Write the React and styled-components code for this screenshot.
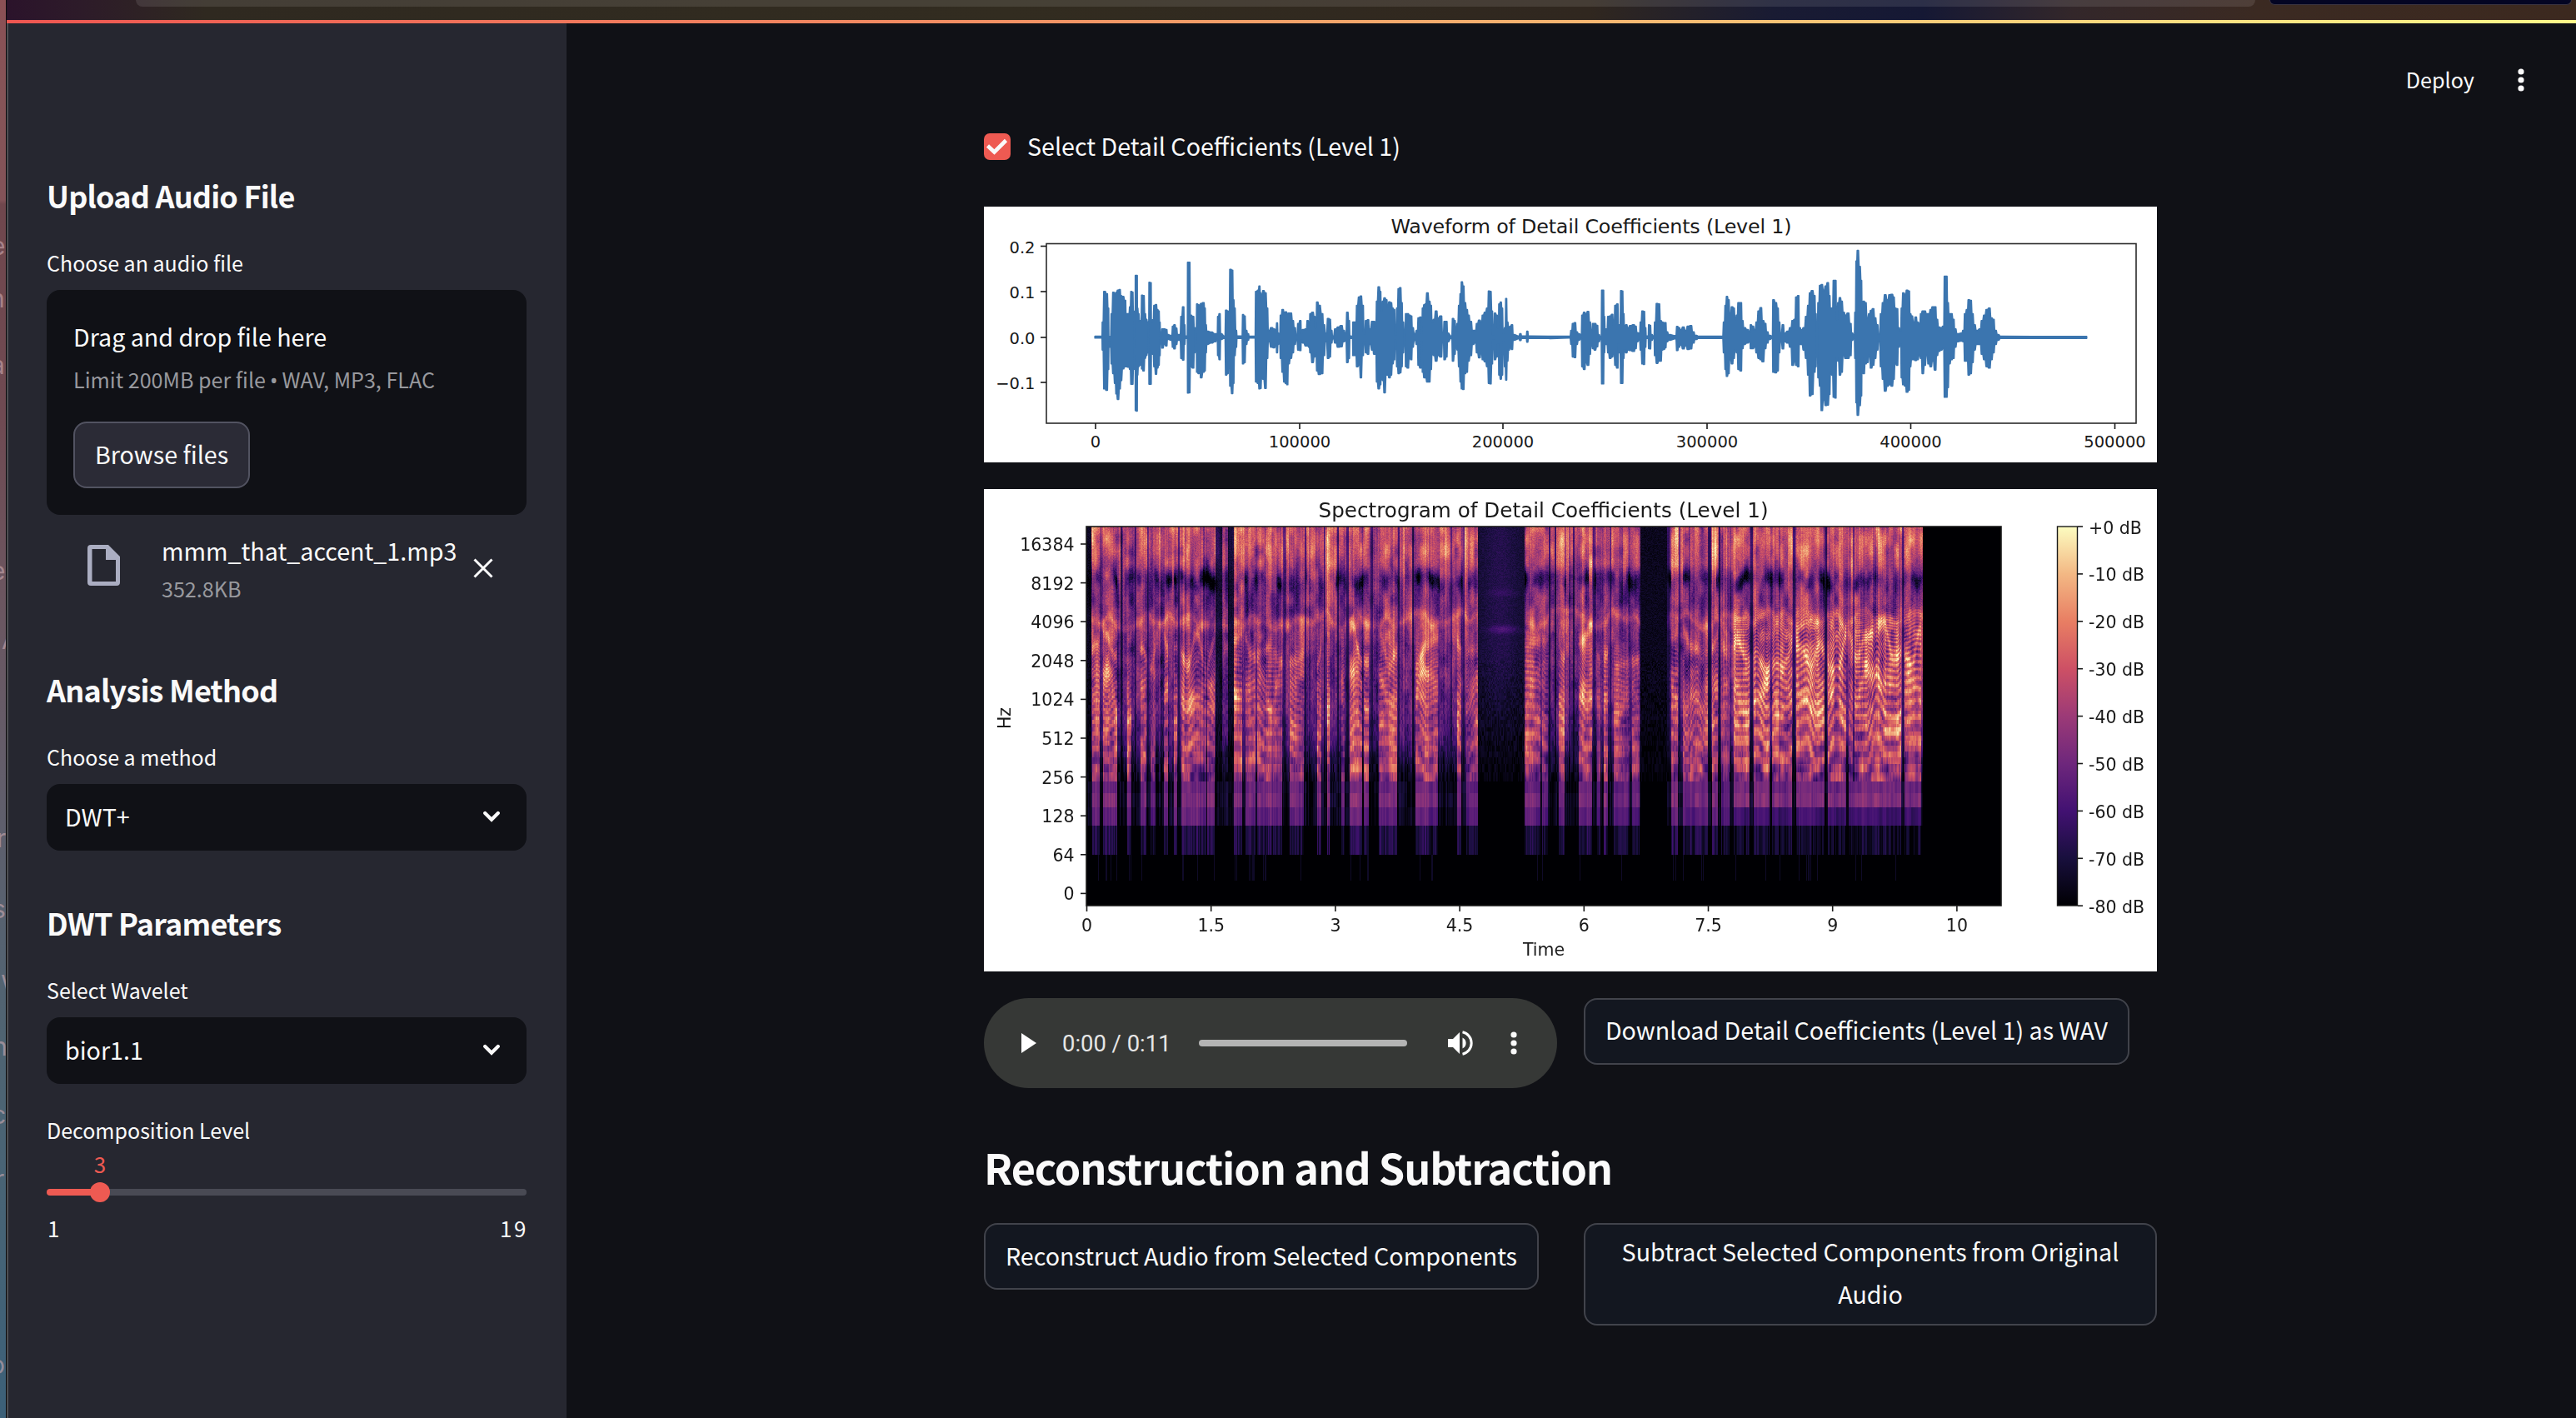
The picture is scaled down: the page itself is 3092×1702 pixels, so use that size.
import React, { useLayoutEffect, useRef } from "react";
import styled, { createGlobalStyle } from "styled-components";

const GlobalStyle = createGlobalStyle`
  * { box-sizing: border-box; }
  html, body { margin: 0; padding: 0; background: #101116; }
  body {
    font-family: "Noto Sans CJK SC", "Noto Sans", sans-serif;
    color: #fafafa;
    overflow: hidden;
  }
`;

/* ---------- window frame ---------- */

const Desktop = styled.div`
  display: flex;
  width: 3092px;
  height: 1702px;
  overflow: hidden;
`;

const Behind = styled.div`
  width: 7px;
  flex: none;
  overflow: hidden;
  padding-top: 277px;
  background: linear-gradient(#8b5055 0, #855457 120px, #835358 240px, #70474d 245px, #6f4a52 500px, #6b5660 720px, #635d6a 920px, #566270 1120px, #4f6472 1250px, #456376 1500px, #3c6078 1702px);
`;

const BehindLine = styled.div`
  height: ${(p) => p.$h}px;
  margin-left: ${(p) => p.$x}px;
  font: 30px/36px "Inter", sans-serif;
  color: rgba(205, 170, 178, 0.6);
  white-space: nowrap;
`;

const Frame = styled.div`
  flex: 1;
  min-width: 0;
  display: flex;
  flex-direction: column;
  border-left: 1px solid #0b0b0d;
`;

const BrowserStrip = styled.div`
  height: 24px;
  flex: none;
  display: flex;
  justify-content: flex-start;
  padding-left: 155px;
  background: linear-gradient(90deg, #2b132b 0, #2d1b29 90px, #2f2920 240px, #322c20 1200px, #30271f 1900px, #191b33 2120px, #151834 2300px, #33272a 2480px, #3b2a22 2700px, #3c291f 100%);
`;

const AddressBar = styled.div`
  width: 2544px;
  height: 8px;
  border-radius: 0 0 10px 10px;
  background: rgba(255, 255, 255, 0.1);
`;

const Extension = styled.div`
  width: 363px;
  height: 6px;
  margin-left: 17px;
  border-radius: 0 0 8px 8px;
  border: 1px solid #3a3440;
  border-top: 0;
  background: #040523;
`;

const Decoration = styled.div`
  height: 4px;
  flex: none;
  background: linear-gradient(90deg, #ee5651, #f3a269 50%, #fff98a);
`;

const Page = styled.div`
  flex: 1;
  min-height: 0;
  display: flex;
`;

/* ---------- sidebar ---------- */

const Sidebar = styled.aside`
  width: 672px;
  flex: none;
  border-left: 2px solid #4d4e52;
  background: #262730;
  padding: 182px 48px 0 46px;
`;

const SideHeading = styled.h2`
  margin: ${(p) => p.$mt || 0}px 0 0;
  font-size: 36px;
  line-height: 48px;
  font-weight: 600;
  letter-spacing: -0.8px;
  white-space: nowrap;
`;

const Label = styled.div`
  margin: ${(p) => p.$mt}px 0 13px;
  font-size: 25px;
  line-height: 40px;
  white-space: nowrap;
`;

const Dropzone = styled.div`
  height: 270px;
  padding: 31px 32px 32px;
  border-radius: 16px;
  background: #101116;
  display: flex;
  flex-direction: column;
  align-items: flex-start;
`;

const BodyText = styled.div`
  font-size: 28.65px;
  line-height: 50px;
  white-space: nowrap;
`;

const Muted = styled.div`
  font-size: 25.1px;
  line-height: 40px;
  color: #98999e;
  white-space: nowrap;
  margin-top: ${(p) => p.$mt || 0}px;
`;

const Bullet = styled.span`
  font-family: "Noto Sans", sans-serif;
  font-size: 25px;
  line-height: 1;
  margin: 0 -0.5px;
`;

const Button = styled.button`
  font: inherit;
  color: inherit;
  font-size: 28.65px;
  line-height: 51px;
  text-align: center;
  min-height: 80px;
  margin: 0;
  padding: ${(p) => p.$pad || "10px 20px 14px"};
  width: ${(p) => (p.$w ? p.$w + "px" : "auto")};
  border: 2px solid #41434b;
  border-radius: 16px;
  background: #131720;
  white-space: ${(p) => (p.$wrap ? "normal" : "nowrap")};
`;

const BrowseButton = styled(Button)`
  margin-top: 31px;
  background: #2b2b36;
  border-color: #525361;
`;

const FileRow = styled.div`
  display: flex;
  align-items: flex-start;
  padding: 18px 40px 0 49px;
  height: 109px;
`;

const FileIcon = styled.svg`
  width: 39px;
  height: 49px;
  margin: 18px 50px 0 0;
  flex: none;
`;

const FileInfo = styled.div`
  flex: 1;
  min-width: 0;
`;

const CloseIcon = styled.svg`
  width: 24px;
  height: 24px;
  flex: none;
  margin-top: 34px;
`;

const SelectBox = styled.div`
  height: 80px;
  padding: 0 32px 0 22px;
  border-radius: 16px;
  background: #101116;
  display: flex;
  align-items: center;
  justify-content: space-between;
  font-size: 28.65px;
  line-height: 76px;
  padding-bottom: 2px;
`;

const Chevron = styled.svg`
  width: 20px;
  height: 14px;
`;

const SliderValue = styled.div`
  margin-top: -7px;
  width: 128px;
  text-align: center;
  font-size: 26px;
  line-height: 30px;
  color: #ee5a52;
`;

const Track = styled.div`
  height: 8px;
  margin-top: 15px;
  border-radius: 4px;
  background: linear-gradient(90deg, #ee5a52 64px, #494a54 64px);
  display: flex;
  align-items: center;
`;

const Thumb = styled.div`
  width: 24px;
  height: 24px;
  flex: none;
  margin-left: 52px;
  border-radius: 50%;
  background: #ee5a52;
`;

const Range = styled.div`
  display: flex;
  justify-content: space-between;
  margin: 19px -2px 0 1px;
  font-size: 26px;
  line-height: 40px;
  letter-spacing: 2.6px;
`;

/* ---------- main area ---------- */

const Main = styled.main`
  flex: 1;
  min-width: 0;
`;

const Toolbar = styled.div`
  height: 122px;
  display: flex;
  justify-content: flex-end;
  align-items: flex-start;
  padding: 47px 56px 0 0;
  font-size: 25.2px;
  line-height: 40px;
`;

const KebabIcon = styled.svg`
  width: 8px;
  height: 28px;
  margin: 7px 6px 0 52px;
`;

const Content = styled.div`
  width: 1408px;
  margin-left: 501px;
  display: flex;
  flex-direction: column;
`;

const CheckRow = styled.div`
  display: flex;
  align-items: center;
  height: 52px;
  margin-bottom: 46px;
`;

const Checkbox = styled.svg`
  width: 32px;
  height: 32px;
  margin-right: 20px;
`;

const CheckLabel = styled.span`
  font-size: 28.65px;
  line-height: 48px;
  margin-top: -2px;
  white-space: nowrap;
`;

const Chart = styled.div`
  height: ${(p) => p.$h}px;
  margin-bottom: 32px;
  background: #fff;
  display: grid;
  & > * { grid-area: 1 / 1; }
`;

const Plot = styled.svg`
  width: 1408px;
  height: 100%;
  display: block;
  & text {
    font-family: "DejaVu Sans", sans-serif;
    fill: #1a1a1a;
  }
`;

const SpectrogramCanvas = styled.canvas`
  width: 1098px;
  height: 455px;
  margin: 45px 0 0 123px;
`;

const Row = styled.div`
  display: flex;
  align-items: flex-start;
`;

const Cell = styled.div`
  width: ${(p) => p.$w}px;
  flex: none;
`;

const Player = styled.div`
  width: 688px;
  height: 108px;
  border-radius: 54px;
  background: #363836;
  display: flex;
  align-items: center;
  padding-left: 44px;
`;

const PlayIcon = styled.svg`
  width: 20px;
  height: 24px;
  margin-right: 30px;
`;

const Time = styled.div`
  width: 164px;
  font: 27.4px/40px Roboto, sans-serif;
  padding-top: 1px;
  color: #e6e6e6;
  white-space: nowrap;
`;

const Timeline = styled.div`
  width: 250px;
  height: 8px;
  border-radius: 4px;
  background: #b4b4b4;
`;

const VolumeIcon = styled.svg`
  width: 32px;
  height: 32px;
  margin-left: 48px;
`;

const PlayerMenu = styled.svg`
  width: 8px;
  height: 28px;
  margin-left: 44px;
`;

const SectionTitle = styled.h3`
  margin: 62px 0 35px;
  font-size: 50.4px;
  line-height: 65px;
  font-weight: 600;
  letter-spacing: -1.1px;
  white-space: nowrap;
`;

/* ---------- waveform data: x, upper edge, lower edge ---------- */

const WAVE_A = `336,821,827 354,821,827 356,770,870 361,660,1010 367,668,1015 371,720,940 373,822,840 376,822,860 380,740,920 384,663,955 389,668,990 392,663,1028 396,655,1048 401,653,1010 404,675,980 409,678,938 415,692,930 418,740,930 424,740,932 428,715,940 431,660,993 434,662,993 437,730,940 439,822,830 441,822,900 442,602,1088 446,602,1090 447,720,960 450,740,930 453,765,925 456,765,900 459,673,938 463,675,945 467,740,900 470,760,890 474,770,880 476,820,830 478,627,993 482,628,993 484,770,880 488,762,885 491,710,930 496,707,957 499,725,935 503,730,925 505,770,890 508,820,828 513,795,863 517,795,850 523,797,855 526,815,832 536,818,835 540,785,860 544,780,866 548,792,850 553,815,835 558,815,835 562,750,900 567,715,906 570,780,850 573,820,828 577,820,828 579,555,1025 583,555,1024 586,745,930 593,750,935 596,790,880 600,820,826 603,705,950 607,708,955 610,740,930 613,703,970 620,700,950 623,720,945 626,780,880 629,803,850 640,806,845 650,812,840 655,812,832 658,750,890 662,740,905 665,812,832 675,820,828 679,727,960 683,730,955 686,790,860 690,580,1000 695,583,1027 698,690,990 701,720,890 705,800,860 708,820,828 720,820,828 723,743,920 727,748,915 731,800,850 736,812,835 740,821,827 754,821,827 757,660,985 763,655,990 766,640,1010 769,665,1008 772,690,970 776,657,975 782,665,1008 786,720,900 790,800,840 798,790,860 804,795,862 809,798,850 812,773,880 815,810,850 818,820,835 822,745,900 827,725,950 831,735,985 835,733,990 839,740,995 842,738,920 848,738,900 853,765,880 858,790,850 863,815,835 868,775,870 873,765,872 876,810,835 880,797,845 888,795,855 892,765,855 896,790,860 899,740,880 905,735,915 910,750,895 913,790,880 917,698,945 922,710,958 930,740,955 934,780,890 940,810,840 946,757,900 950,760,895 954,800,845 958,820,830 965,795,845 972,788,860 980,783,858 986,800,840 991,810,838 996,735,915 1000,765,900 1003,820,828 1009,822,828 1011,770,890 1018,770,890 1021,710,930 1027,680,925 1031,676,970 1036,710,890 1040,812,840 1045,765,880 1050,762,885 1054,795,850 1062,768,870 1066,768,885 1070,790,885 1073,695,985 1078,643,1010 1082,660,995 1085,730,960 1089,695,980 1093,683,1024 1098,690,960 1101,715,960 1106,697,970 1110,700,960 1114,720,920 1118,725,905 1122,815,835 1126,720,930 1130,650,955 1134,646,952 1138,700,930 1141,770,880 1146,822,828 1149,740,930 1154,740,935 1158,745,900 1163,748,905 1166,790,860 1172,812,835 1178,800,850 1182,755,925 1187,752,935 1190,810,840 1193,720,950 1197,708,970 1200,705,970 1205,665,985 1210,695,985 1214,710,940 1218,770,880 1222,760,890 1228,730,910 1233,755,890 1240,748,895 1246,810,840 1250,768,905 1255,768,895 1258,810,840 1268,820,828 1272,757,910 1276,765,885 1280,800,855 1284,775,870 1288,710,930 1292,668,985 1295,625,1010 1299,640,1012 1303,700,955 1308,725,950 1312,745,910 1318,768,890 1324,800,850 1330,800,845 1335,775,880 1341,763,898 1346,770,880 1350,745,905 1356,735,912 1362,720,930 1366,658,990 1370,660,992 1374,730,920 1377,815,835 1382,738,905 1386,745,895 1390,790,850 1393,705,960 1397,698,975 1400,720,960 1404,810,840 1408,790,930 1411,685,978 1414,770,910 1418,790,870 1422,785,860 1426,780,868 1430,815,835 1444,820,830 1448,812,836 1452,820,828 1463,820,828 1466,803,842 1470,820,828 1524,821,828`;

const WAVE_B = `0,821,829 50,821,827 54,800,850 58,775,895 63,772,897 67,805,850 72,812,835 78,815,830 81,745,930 86,735,940 90,740,915 95,732,925 100,770,885 103,810,850 108,775,865 112,775,870 118,782,858 121,815,840 127,822,830 130,655,992 133,655,992 135,750,880 138,795,850 142,795,850 145,750,880 150,748,900 155,742,895 159,780,880 163,710,925 168,705,935 171,780,850 174,780,880 177,657,990 180,658,990 183,740,900 186,785,870 190,780,880 194,790,870 200,783,872 208,780,875 213,785,865 217,808,840 222,810,835 226,770,870 230,730,920 234,732,922 237,790,860 240,820,828 244,820,828 246,780,865 249,782,866 252,815,835 258,820,828 261,770,890 266,703,918 271,705,910 275,765,910 279,770,870 283,772,868 287,772,862 290,805,840 296,815,835 312,819,830 316,786,872 320,790,860 325,797,852 331,788,866 337,800,855 343,785,868 350,783,866 355,805,845 362,818,832 370,821,828 428,821,828 432,770,880 436,710,940 439,678,965 443,690,955 447,745,900 452,715,920 456,720,900 460,760,870 464,745,880 468,700,940 474,700,945 477,765,865 482,790,850 490,797,845 496,805,840 498,780,865 503,785,865 508,797,860 513,770,880 518,730,900 523,718,905 528,765,912 534,775,865 538,805,845 545,818,832 551,820,828 554,690,950 560,700,952 565,720,945 568,770,880 573,810,840 578,780,866 582,810,840 590,803,845 597,790,860 602,765,925 607,760,910 611,680,925 616,675,930 619,790,850 624,798,850 630,790,870 636,750,900 641,710,960 645,665,1035 650,657,1030 656,675,950 659,740,930 662,820,828 666,700,970 670,638,1000 674,635,1088 679,655,1050 684,640,1070 689,628,1068 693,675,1030 696,720,950 700,720,960 704,620,1040 708,620,1043 711,760,900 715,700,910 719,682,960 723,695,950 728,735,890 733,745,900 739,738,900 745,775,890 749,810,835 754,820,828 757,735,900 760,550,1060 763,512,1105 768,570,1070 772,620,1035 774,720,900 778,695,955 782,700,920 787,755,915 792,740,890 796,728,935 801,722,925 806,755,900 811,780,870 816,812,840 821,740,930 826,700,975 831,672,1018 837,690,1000 842,672,995 848,670,1000 852,680,975 856,720,920 861,722,925 864,790,860 869,800,850 872,720,970 876,665,995 881,670,1000 885,655,1022 890,658,1015 893,740,930 897,748,905 902,770,905 907,752,908 911,770,905 916,775,890 920,740,900 924,730,955 929,730,925 934,740,890 939,740,920 944,725,930 949,715,910 955,715,942 959,760,890 964,788,875 970,790,870 975,785,865 979,605,1040 983,605,1040 986,700,1005 990,740,920 995,740,905 1000,760,900 1004,795,860 1010,812,840 1020,810,838 1025,800,840 1029,740,910 1034,725,910 1038,690,960 1043,692,955 1047,740,915 1052,780,870 1058,800,850 1066,795,850 1071,765,885 1077,745,905 1083,725,930 1089,720,935 1094,755,905 1099,760,880 1104,800,850 1110,815,835 1118,821,828 1200,822,828 1330,822,828`;

const parse = (text, x0, sx) =>
  text.split(" ").map((t) => {
    const [x, a, b] = t.split(",").map(Number);
    return [x0 + x / sx, (a - 354) / 3, (b - 354) / 3];
  });

const WAVE = [...parse(WAVE_A, -21, 2.1778), ...parse(WAVE_B, 679, 2.0632)];

/* Holds each sample up to the midpoint towards its neighbour, with slightly slanted flanks. */
const edge = (points, k) => {
  const out = [];
  for (let i = 0; i < points.length; i++) {
    const p = points[i];
    const prev = points[Math.max(0, i - 1)];
    const next = points[Math.min(points.length - 1, i + 1)];
    const l = p[0] - Math.min(1.3, Math.abs(p[0] - prev[0]) * 0.36) * Math.sign(p[0] - prev[0] || 1);
    const r = p[0] + Math.min(1.3, Math.abs(next[0] - p[0]) * 0.36) * Math.sign(next[0] - p[0] || 1);
    out.push(`${l.toFixed(1)} ${p[k].toFixed(1)}`, `${r.toFixed(1)} ${p[k].toFixed(1)}`);
  }
  return out.join("L");
};

const wavePath = "M" + edge(WAVE, 1) + "L" + edge([...WAVE].reverse(), 2) + "Z";

const WAVE_X = [[134, "0"], [379, "100000"], [623, "200000"], [868, "300000"], [1112.5, "400000"], [1357.5, "500000"]];
const WAVE_Y = [[47.5, "0.2"], [102, "0.1"], [157, "0.0"], [211, "−0.1"]];

function WaveformPlot() {
  return (
    <Plot viewBox="0 0 1408 307">
      <text x="729" y="32" fontSize="23.8" textAnchor="middle" textLength="481">
        Waveform of Detail Coefficients (Level 1)
      </text>
      <path d={wavePath} fill="#3b75af" stroke="#3b75af" strokeWidth="1.8" strokeLinejoin="round" />
      <rect x="75" y="44.5" width="1308" height="215.5" fill="none" stroke="#2b2b2b" strokeWidth="1.6" />
      {WAVE_X.map(([x, t]) => (
        <g key={t}>
          <path d={`M${x} 260v7`} stroke="#1a1a1a" strokeWidth="1.6" />
          <text x={x} y="288.5" fontSize="19.5" textAnchor="middle">{t}</text>
        </g>
      ))}
      {WAVE_Y.map(([y, t]) => (
        <g key={t}>
          <path d={`M68 ${y}h7`} stroke="#1a1a1a" strokeWidth="1.6" />
          <text x="61.5" y={y + 8} fontSize="19.5" textAnchor="end">{t}</text>
        </g>
      ))}
    </Plot>
  );
}

/* ---------- spectrogram ---------- */

const MAGMA = [
  [0, 0, 0, 3], [0.125, 24, 15, 61], [0.25, 66, 17, 114], [0.375, 110, 39, 124],
  [0.5, 156, 58, 119], [0.625, 205, 80, 101], [0.75, 232, 126, 99], [0.875, 243, 184, 132], [1, 252, 252, 192],
];

const magma = (v) => {
  const c = Math.max(0, Math.min(0.9999, v)) * 8;
  const i = Math.floor(c);
  const f = c - i;
  return [1, 2, 3].map((k) => MAGMA[i][k] + (MAGMA[i + 1][k] - MAGMA[i][k]) * f);
};

/* voiced bursts: start, end, level */
const BURSTS = [
  [7, 16, 0.85], [20, 37, 0.9], [49, 54, 0.7], [65, 72, 0.75], [77, 83, 0.5], [93, 98, 0.8], [105, 109, 0.8],
  [114, 136, 0.9], [136, 144, 0.6], [145, 154, 0.95], [172, 175, 0.3], [177, 187, 0.85], [191, 203, 0.75], [205, 223, 0.85],
  [223, 235, 0.55], [244, 253, 0.9], [253, 261, 0.65], [277, 282, 0.85], [289, 292, 1], [306, 310, 0.6],
  [316, 331, 0.95], [333, 339, 0.9], [351, 356, 0.85], [356, 363, 0.65], [363, 373, 0.85], [395, 411, 0.95],
  [411, 422, 0.65], [445, 450, 0.85], [456, 470, 0.6], [526, 538, 0.9], [538, 545, 0.75], [547, 554, 0.65],
  [567, 574, 0.8], [591, 607, 0.9], [613, 617, 0.4], [621, 626, 0.85], [633, 643, 0.65], [643, 652, 0.5], [655, 664, 0.6],
  [702, 710, 0.95], [716, 746, 0.72], [751, 758, 0.9], [762, 772, 0.45], [777, 796, 0.88], [801, 820, 0.92],
  [823, 842, 0.75], [842, 847, 0.85], [852, 886, 0.85], [890, 912, 0.85], [915, 922, 0.6], [922, 961, 0.9],
  [961, 978, 0.9], [982, 1002, 0.8],
];

/* near-silent stretches and short dropouts: start, end, remaining level */
const GAPS = [
  [0, 6, 0.12], [17, 18, 0.5], [41, 43, 0.5], [58, 60, 0.5], [73, 75, 0.5], [110, 112, 0.45], [155, 163, 0.27], [170, 177, 0.2],
  [236, 239, 0.5], [262, 264, 0.5], [285, 287, 0.5], [301, 303, 0.45], [312, 315, 0.35], [341, 344, 0.45],
  [374, 376, 0.5], [391, 393, 0.35], [437, 439, 0.5], [452, 454, 0.5], [555, 557, 0.4], [562, 564, 0.4],
  [584, 586, 0.5], [608, 610, 0.5], [628, 630, 0.5], [697, 700, 0.4], [711, 713, 0.5], [746, 750, 0.35],
  [759, 761, 0.4], [797, 800, 0.4], [848, 851, 0.45], [886, 889, 0.35], [920, 922, 0.5], [979, 981, 0.5],
];

/* bright broadband hiss between 7 and 20 kHz: start, end */
const SIBILANTS = [[7, 12], [37, 41], [103, 105], [178, 190], [240, 243], [265, 275], [286, 299], [312, 317], [376, 383], [424, 439], [452, 458], [576, 580], [603, 607], [644, 648], [702, 716], [751, 756], [842, 848], [886, 888], [918, 922]];

/* average level against octaves above 64 Hz */
const TILT = [[1.7, 0.42], [2.3, 0.5], [2.8, 0.58], [3.5, 0.57], [4.3, 0.54], [5, 0.48], [5.5, 0.48], [6, 0.53], [6.4, 0.43], [6.8, 0.42], [7.1, 0.41], [7.5, 0.57], [8, 0.65], [8.5, 0.64], [9, 0.56]];
/* how much of that level remains between bursts */
const REST = [[1.7, 0.02], [2.4, 0.22], [3, 0.4], [3.8, 0.55], [4.5, 0.65], [5.3, 0.75], [6, 0.85], [7, 0.86], [8, 0.88], [9, 0.86]];

const curve = (table, x) => {
  if (x <= table[0][0]) return table[0][1];
  for (let i = 1; i < table.length; i++) {
    if (x < table[i][0]) {
      const [x0, y0] = table[i - 1];
      const [x1, y1] = table[i];
      return y0 + ((y1 - y0) * (x - x0)) / (x1 - x0);
    }
  }
  return table[table.length - 1][1];
};

const hash = (x, y) => {
  const s = Math.sin(x * 127.1 + y * 311.7) * 43758.5453;
  return s - Math.floor(s);
};
const smooth = (x, y) => {
  const xi = Math.floor(x), yi = Math.floor(y);
  const u = x - xi, v = y - yi;
  const a = u * u * (3 - 2 * u), b = v * v * (3 - 2 * v);
  const top = hash(xi, yi) * (1 - a) + hash(xi + 1, yi) * a;
  const bottom = hash(xi, yi + 1) * (1 - a) + hash(xi + 1, yi + 1) * a;
  return top * (1 - b) + bottom * b;
};
const lookup = (list, x, none) => {
  for (const [s, e, v] of list) if (x >= s && x < e) return v === undefined ? 1 : v;
  return none;
};
const bump = (x, c, w) => Math.exp(-(((x - c) / w) ** 2));

function level(x, y) {
  if (x > 1003) return 0;
  const col = Math.floor(x / 1.15);
  const octave = (394 - y) / 46.7;
  const hz = octave > 0 ? 64 * 2 ** octave : Math.max(0, ((440 - y) / 46) * 64);
  const bin = Math.round(hz / 43.07);
  const burst = lookup(BURSTS, x, 0.06);
  const quiet = (x >= 470 && x < 526) || (x > 664 && x < 697);
  const streak = hash(col, 7) - 0.5;

  if (bin === 0) return 0;
  if (bin === 1) return burst > 0.6 && hash(col, 3) > 0.9 ? 0.08 : 0;
  if (bin === 2) return quiet || burst <= 0.3 ? 0 : (x > 774 ? 0.09 : 0.17) * burst + streak * 0.17;
  if (bin <= 5) {
    if (quiet) return 0;
    const b = burst > 0.3 ? 0.22 + burst * 0.2 + streak * 0.09 : Math.max(0, 0.05 + streak * 0.15);
    const late = x > 774 && bin === 3 ? 0.7 : 1;
    return late * b * (bin === 3 ? 0.86 : bin === 4 ? 1.06 : 0.94) + (hash(Math.floor(x / 5), bin) - 0.5) * 0.07;
  }

  const fine = hash(col, bin) - 0.5;
  const texture = hash(col, Math.floor(bin ** 0.5 * 9)) - 0.5;
  if (quiet) {
    const first = x < 600;
    const floor = (first ? 0.16 : 0.07) * Math.min(1, Math.max(0, (octave - 1.6) / 3.6));
    const centre = first ? 0.6 + 0.4 * bump(x, 496, 20) : 0.8;
    return floor * centre + fine * (octave > 5 ? 0.07 : 0.1) + (first ? (0.13 * bump(octave, 5.8, 0.1) + 0.05 * bump(octave, 6.75, 0.1)) * bump(x, 500, 18) : 0);
  }

  const late = x > 774;
  const glide = smooth(x / 12, 4) * 2 - 1;
  const f0 = (late ? 205 : 150) * (1 + (late ? 0.3 : 0.28) * glide);
  const harmonic = Math.cos((bin * 43.07 * 2 * Math.PI) / f0);
  const voiced = Math.max(0, Math.min(1, (late ? 6.7 : 5.9) - octave)) * Math.min(1, burst * 1.2);
  const energy = burst > 0.3 ? 0.55 + burst * 0.5 : curve(REST, octave);
  const broad = hash(Math.floor((x + 2 * smooth(x / 5, 3)) / 5), 12) - 0.5;
  const narrow = hash(Math.floor(x / 2.4), 15) - 0.5;
  const air = smooth(x / 6, 60 + octave * 0.9) - 0.5;
  const patch = smooth(x / 6, 90 + octave * 3.2) - 0.5;
  const first = bump(octave, 4.1 + 1.5 * (smooth(x / 13, 20) - 0.5), 0.3);
  const second = bump(octave, 5.4 + 1.3 * (smooth(x / 11, 30) - 0.5), 0.18);
  const third = bump(octave, 6.05 + 0.5 * (smooth(x / 9, 35) - 0.5), 0.12);
  const hole = bump(octave, 7.08 + 0.3 * (smooth(x / 8, 44) - 0.5), 0.24) * Math.max(0, smooth(x / 7, 40) - 0.3) * 0.52;
  const hiss = lookup(SIBILANTS, x, 0) * bump(octave, 7.6, 1.1);
  const rank = Math.min(1, Math.max(0, (octave - 3.2) / 2));

  let v = curve(TILT, octave) * energy;
  v += (broad * 0.15 + narrow * 0.17) * (0.4 + 0.6 * rank) + streak * 0.08;
  v += air * 0.24 * Math.min(1, energy) + patch * 0.26 * Math.min(1, energy);
  v += (first * 0.15 + second * 0.2) * (0.1 + burst) + third * 0.13;
  v += harmonic * voiced * (late ? 0.13 : 0.09);
  v -= hole * (1 - hiss);
  v += hiss * 0.16;
  v += texture * 0.09 + fine * 0.09;
  if (late) v += 0.06 * bump(octave, 4.9, 1.5);
  const gap = lookup(GAPS, x, 1);
  return v * gap + (gap < 0.3 ? fine * 0.06 : 0);
}

function Spectrogram() {
  const ref = useRef(null);
  useLayoutEffect(() => {
    const ctx = ref.current.getContext("2d");
    const image = ctx.createImageData(1098, 455);
    for (let y = 0; y < 455; y++) {
      for (let x = 0; x < 1098; x++) {
        const [r, g, b] = magma(level(x, y));
        const i = (y * 1098 + x) * 4;
        image.data[i] = r;
        image.data[i + 1] = g;
        image.data[i + 2] = b;
        image.data[i + 3] = 255;
      }
    }
    ctx.putImageData(image, 0, 0);
  }, []);
  return <SpectrogramCanvas ref={ref} width={1098} height={455} />;
}

const HZ = ["16384", "8192", "4096", "2048", "1024", "512", "256", "128", "64", "0"];
const SECONDS = ["0", "1.5", "3", "4.5", "6", "7.5", "9", "10"];
const DB = ["+0", "-10", "-20", "-30", "-40", "-50", "-60", "-70", "-80"];

function SpectrogramAxes() {
  return (
    <Plot viewBox="0 0 1408 579">
      <defs>
        <linearGradient id="magma" x1="0" y1="1" x2="0" y2="0">
          {MAGMA.map(([o, r, g, b]) => (
            <stop key={o} offset={o} stopColor={`rgb(${r},${g},${b})`} />
          ))}
        </linearGradient>
      </defs>
      <text x="671.5" y="33.5" fontSize="24.6" textAnchor="middle" textLength="540">
        Spectrogram of Detail Coefficients (Level 1)
      </text>
      <rect x="123" y="45" width="1098" height="455" fill="none" stroke="#1a1a1a" strokeWidth="1.6" />
      {HZ.map((t, i) => {
        const y = 66 + i * 46.6;
        return (
          <g key={t}>
            <path d={`M116 ${y}h7`} stroke="#1a1a1a" strokeWidth="1.6" />
            <text x="108.5" y={y + 8} fontSize="20.5" textAnchor="end">{t}</text>
          </g>
        );
      })}
      {SECONDS.map((t, i) => {
        const x = 123.5 + i * 149.2;
        return (
          <g key={t}>
            <path d={`M${x} 500v7`} stroke="#1a1a1a" strokeWidth="1.6" />
            <text x={x} y="531" fontSize="20.5" textAnchor="middle">{t}</text>
          </g>
        );
      })}
      <text x="672" y="560" fontSize="20.5" textAnchor="middle">Time</text>
      <text transform="translate(32 275) rotate(-90)" fontSize="20.5" textAnchor="middle">Hz</text>
      <rect x="1288.5" y="45" width="24" height="455" fill="url(#magma)" stroke="#1a1a1a" strokeWidth="1.4" />
      {DB.map((t, i) => {
        const y = 45 + i * 56.9;
        return (
          <g key={t}>
            <path d={`M1313 ${y}h6`} stroke="#1a1a1a" strokeWidth="1.6" />
            <text x="1326" y={y + 8.5} fontSize="20.5">{t} dB</text>
          </g>
        );
      })}
    </Plot>
  );
}

/* ---------- small icons ---------- */

const ChevronDown = () => (
  <Chevron viewBox="0 0 20 14">
    <path d="M2.2 3l7.8 7.8L17.8 3" fill="none" stroke="#fafafa" strokeWidth="4.2" strokeLinecap="round" />
  </Chevron>
);

const Dots = () => (
  <>
    <circle cx="4" cy="4" r="3.6" fill="#fafafa" />
    <circle cx="4" cy="14" r="3.6" fill="#fafafa" />
    <circle cx="4" cy="24" r="3.6" fill="#fafafa" />
  </>
);

const BEHIND = [[63, "e", -11], [80, "ne", -12], [247, "a", -11], [83, "e", -11], [238, "A", 2], [85, "r", -4], [85, "s", -9], [80, "w", 1], [82, "n", -9], [77, "c", -10], [223, "r", -6], [60, "o", -12]];

export default function App() {
  return (
    <>
      <GlobalStyle />
      <Desktop>
        <Behind>
          {BEHIND.map(([h, t, x], i) => (
            <BehindLine key={i} $h={h} $x={x}>{t}</BehindLine>
          ))}
        </Behind>
        <Frame>
          <BrowserStrip>
            <AddressBar />
            <Extension />
          </BrowserStrip>
          <Decoration />
          <Page>
            <Sidebar>
              <SideHeading>Upload Audio File</SideHeading>
              <Label $mt={37}>Choose an audio file</Label>
              <Dropzone>
                <BodyText>Drag and drop file here</BodyText>
                <Muted $mt={6}>Limit 200MB per file <Bullet>•</Bullet> WAV, MP3, FLAC</Muted>
                <BrowseButton $w={212}>Browse files</BrowseButton>
              </Dropzone>
              <FileRow>
                <FileIcon viewBox="0 0 39 49">
                  <path
                    fillRule="evenodd"
                    fill="#abaec2"
                    d="M4 0H25L39 14V45a4 4 0 0 1-4 4H4a4 4 0 0 1-4-4V4a4 4 0 0 1 4-4ZM5.5 5V44H34V18H22V5Z"
                  />
                </FileIcon>
                <FileInfo>
                  <BodyText>mmm_that_accent_1.mp3</BodyText>
                  <Muted>352.8KB</Muted>
                </FileInfo>
                <CloseIcon viewBox="0 0 24 24">
                  <path d="M1.5 1.5l21 21M22.5 1.5l-21 21" stroke="#fafafa" strokeWidth="3" />
                </CloseIcon>
              </FileRow>
              <SideHeading $mt={76}>Analysis Method</SideHeading>
              <Label $mt={37}>Choose a method</Label>
              <SelectBox>
                DWT+
                <ChevronDown />
              </SelectBox>
              <SideHeading $mt={62}>DWT Parameters</SideHeading>
              <Label $mt={37}>Select Wavelet</Label>
              <SelectBox>
                bior1.1
                <ChevronDown />
              </SelectBox>
              <Label $mt={35}>Decomposition Level</Label>
              <SliderValue>3</SliderValue>
              <Track>
                <Thumb />
              </Track>
              <Range>
                <span>1</span>
                <span>19</span>
              </Range>
            </Sidebar>
            <Main>
              <Toolbar>
                Deploy
                <KebabIcon viewBox="0 0 8 28"><Dots /></KebabIcon>
              </Toolbar>
              <Content>
                <CheckRow>
                  <Checkbox viewBox="0 0 32 32">
                    <rect width="32" height="32" rx="7" fill="#ee5a52" />
                    <path d="M4.5 15l8 7.5L26.5 8.5" fill="none" stroke="#fafafa" strokeWidth="4.6" />
                  </Checkbox>
                  <CheckLabel>Select Detail Coefficients (Level 1)</CheckLabel>
                </CheckRow>
                <Chart $h={307}>
                  <WaveformPlot />
                </Chart>
                <Chart $h={579}>
                  <Spectrogram />
                  <SpectrogramAxes />
                </Chart>
                <Row>
                  <Cell $w={720}>
                    <Player>
                      <PlayIcon viewBox="0 0 20 24"><path d="M1 0l18 12L1 24z" fill="#fff" /></PlayIcon>
                      <Time>0:00 / 0:11</Time>
                      <Timeline />
                      <VolumeIcon viewBox="0 0 32 32">
                        <path d="M1 11v10h6l8 8V3L7 11z" fill="#fff" />
                        <path d="M18.5 9.5v13a7.2 7.2 0 0 0 0-13z" fill="#fff" />
                        <path d="M18.5 2.8a13.5 13.5 0 0 1 0 26.4" fill="none" stroke="#fff" strokeWidth="3" />
                      </VolumeIcon>
                      <PlayerMenu viewBox="0 0 8 28"><Dots /></PlayerMenu>
                    </Player>
                  </Cell>
                  <Button $w={655} $pad="9px 20px 15px">Download Detail Coefficients (Level 1) as WAV</Button>
                </Row>
                <SectionTitle>Reconstruction and Subtraction</SectionTitle>
                <Row>
                  <Cell $w={720}>
                    <Button $w={666}>Reconstruct Audio from Selected Components</Button>
                  </Cell>
                  <Button $w={688} $wrap $pad="6px 24px 11px">
                    Subtract Selected Components from Original Audio
                  </Button>
                </Row>
              </Content>
            </Main>
          </Page>
        </Frame>
      </Desktop>
    </>
  );
}
